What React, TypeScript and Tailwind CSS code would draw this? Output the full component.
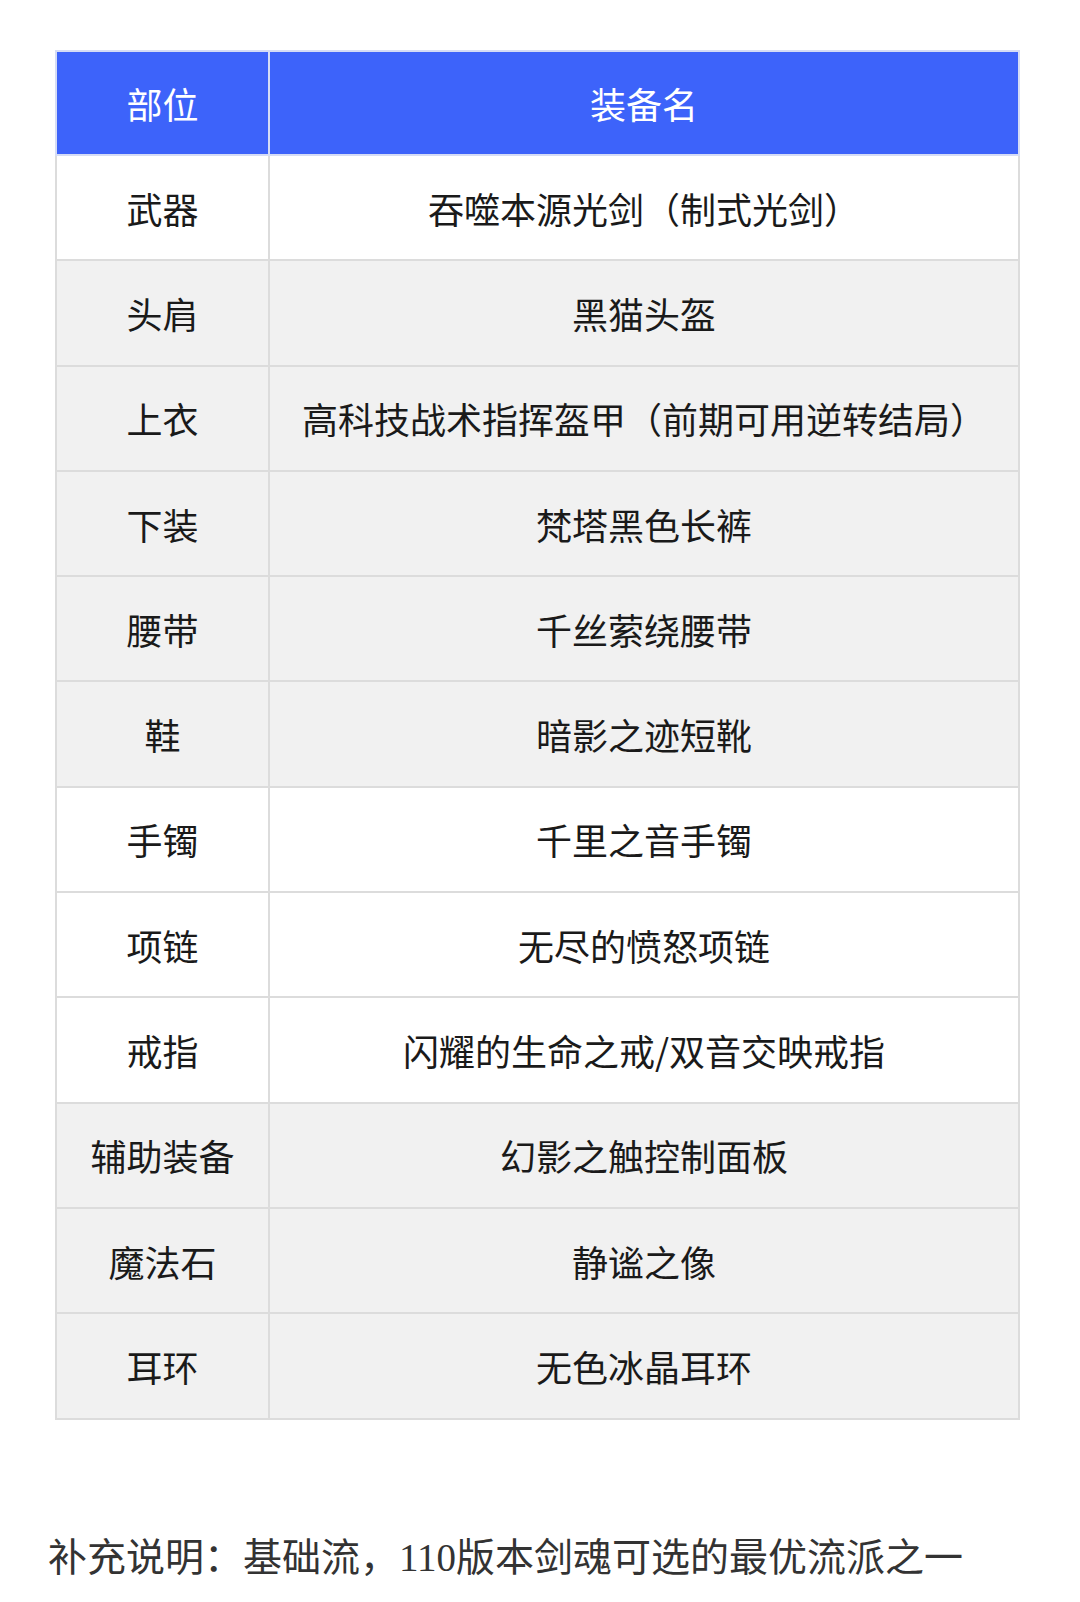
const rows = [
  { part: '武器', name: '吞噬本源光剑（制式光剑）', gray: false },
  { part: '头肩', name: '黑猫头盔', gray: true },
  { part: '上衣', name: '高科技战术指挥盔甲（前期可用逆转结局）', gray: true },
  { part: '下装', name: '梵塔黑色长裤', gray: true },
  { part: '腰带', name: '千丝萦绕腰带', gray: true },
  { part: '鞋', name: '暗影之迹短靴', gray: true },
  { part: '手镯', name: '千里之音手镯', gray: false },
  { part: '项链', name: '无尽的愤怒项链', gray: false },
  { part: '戒指', name: '闪耀的生命之戒/双音交映戒指', gray: false },
  { part: '辅助装备', name: '幻影之触控制面板', gray: true },
  { part: '魔法石', name: '静谧之像', gray: true },
  { part: '耳环', name: '无色冰晶耳环', gray: true },
];

export default function App() {
  return (
    <div className="w-[1080px] min-h-[1602px] bg-white pt-[50px] [font-family:'Noto_Sans_CJK_SC',sans-serif]">
      {/* 装备表 */}
      <table className="ml-[55px] w-[965px] table-fixed border-collapse border-2 border-[#dcdcdc] text-[36px] text-[#1a1a1a]">
        <colgroup>
          <col className="w-[213px]" />
          <col />
        </colgroup>
        <thead>
          <tr className="h-[104px] bg-[#3d63fa] text-white">
            <th className="border-2 border-[#d5dcf5] font-normal">部位</th>
            <th className="border-2 border-[#d5dcf5] font-normal">装备名</th>
          </tr>
        </thead>
        <tbody>
          {rows.map((r) => (
            <tr key={r.part} className={r.gray ? 'h-[105.3px] bg-[#f1f1f1]' : 'h-[105.3px] bg-white'}>
              <td className="border-2 border-[#dcdcdc] text-center whitespace-nowrap">{r.part}</td>
              <td className="border-2 border-[#dcdcdc] text-center whitespace-nowrap">{r.name}</td>
            </tr>
          ))}
        </tbody>
      </table>

      {/* 说明 */}
      <p className="ml-[48px] mt-[110px] text-[39px] leading-[56px] text-[#333] [font-family:'Liberation_Serif','Noto_Sans_CJK_SC',serif]">
        补充说明：基础流，110版本剑魂可选的最优流派之一
      </p>
    </div>
  );
}
